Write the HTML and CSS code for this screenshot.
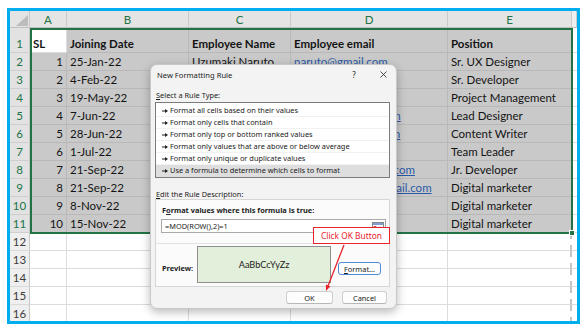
FILE: index.html
```html
<!DOCTYPE html>
<html>
<head>
<meta charset="utf-8">
<title>New Formatting Rule</title>
<link rel="stylesheet" href="styles.css">
</head>
<body>
<div class="frame">
  <div class="sheet">
    <div class="corner"><svg width="20" height="17" viewBox="0 0 20 17"><polygon points="18,4 18,15 6,15" fill="#bcbcbc"/></svg></div>
    <div class="ch">A</div><div class="ch">B</div><div class="ch">C</div><div class="ch">D</div><div class="ch">E</div><div class="ch off"></div>

    <div class="rh">1</div><div class="c act hd">SL</div><div class="c s hd">Joining Date</div><div class="c s hd">Employee Name</div><div class="c s hd">Employee email</div><div class="c s hd">Position</div><div class="c"></div>
    <div class="rh">2</div><div class="c s n">1</div><div class="c s">25-Jan-22</div><div class="c s">Uzumaki Naruto</div><div class="c s lnk">naruto@gmail.com</div><div class="c s">Sr. UX Designer</div><div class="c"></div>
    <div class="rh">3</div><div class="c s n">2</div><div class="c s">4-Feb-22</div><div class="c s"></div><div class="c s"></div><div class="c s">Sr. Developer</div><div class="c"></div>
    <div class="rh">4</div><div class="c s n">3</div><div class="c s">19-May-22</div><div class="c s"></div><div class="c s"></div><div class="c s">Project Management</div><div class="c"></div>
    <div class="rh">5</div><div class="c s n">4</div><div class="c s">7-Jun-22</div><div class="c s"></div><div class="c s lnk">kakashi.h@gmail.com</div><div class="c s">Lead Designer</div><div class="c"></div>
    <div class="rh">6</div><div class="c s n">5</div><div class="c s">28-Jun-22</div><div class="c s"></div><div class="c s lnk">hinata.hy@gmail.com</div><div class="c s">Content Writer</div><div class="c"></div>
    <div class="rh">7</div><div class="c s n">6</div><div class="c s">1-Jul-22</div><div class="c s"></div><div class="c s"></div><div class="c s">Team Leader</div><div class="c"></div>
    <div class="rh">8</div><div class="c s n">7</div><div class="c s">21-Sep-22</div><div class="c s"></div><div class="c s lnk">shikamaru.n@gmail.com</div><div class="c s">Jr. Developer</div><div class="c"></div>
    <div class="rh">9</div><div class="c s n">8</div><div class="c s">21-Sep-22</div><div class="c s"></div><div class="c s lnk">orochimaru.san@gmail.com</div><div class="c s">Digital marketer</div><div class="c"></div>
    <div class="rh">10</div><div class="c s n">9</div><div class="c s">8-Nov-22</div><div class="c s"></div><div class="c s"></div><div class="c s">Digital marketer</div><div class="c"></div>
    <div class="rh">11</div><div class="c s n">10</div><div class="c s">15-Nov-22</div><div class="c s"></div><div class="c s"></div><div class="c s">Digital marketer</div><div class="c"></div>
    <div class="rh off">12</div><div class="c"></div><div class="c"></div><div class="c"></div><div class="c"></div><div class="c pb"></div><div class="c"></div>
    <div class="rh off">13</div><div class="c"></div><div class="c"></div><div class="c"></div><div class="c"></div><div class="c pb"></div><div class="c"></div>
    <div class="rh off">14</div><div class="c"></div><div class="c"></div><div class="c"></div><div class="c"></div><div class="c pb"></div><div class="c"></div>
    <div class="rh off">15</div><div class="c"></div><div class="c"></div><div class="c"></div><div class="c"></div><div class="c pb"></div><div class="c"></div>
    <div class="rh off">16</div><div class="c"></div><div class="c"></div><div class="c"></div><div class="c"></div><div class="c pb"></div><div class="c"></div>
  </div>

  <div class="selection"><span class="handle"></span></div>

  <div class="dialog">
    <div class="dlg-title">
      <span class="dlg-name">New Formatting Rule</span>
      <span class="qm">?</span>
      <svg class="close" width="7" height="7" viewBox="0 0 7 7"><path d="M0.5 0.5L6.5 6.5M6.5 0.5L0.5 6.5" stroke="#222" stroke-width="0.8"/></svg>
    </div>
    <div class="dlg-label"><u>S</u>elect a Rule Type:</div>
    <div class="listbox">
      <div class="item"><svg class="bullet" width="6" height="4" viewBox="0 0 6 4"><path d="M0 1.5h3v1H0zM3 0l3 2-3 2z" fill="#222"/></svg>Format all cells based on their values</div>
      <div class="item"><svg class="bullet" width="6" height="4" viewBox="0 0 6 4"><path d="M0 1.5h3v1H0zM3 0l3 2-3 2z" fill="#222"/></svg>Format only cells that contain</div>
      <div class="item"><svg class="bullet" width="6" height="4" viewBox="0 0 6 4"><path d="M0 1.5h3v1H0zM3 0l3 2-3 2z" fill="#222"/></svg>Format only top or bottom ranked values</div>
      <div class="item"><svg class="bullet" width="6" height="4" viewBox="0 0 6 4"><path d="M0 1.5h3v1H0zM3 0l3 2-3 2z" fill="#222"/></svg>Format only values that are above or below average</div>
      <div class="item"><svg class="bullet" width="6" height="4" viewBox="0 0 6 4"><path d="M0 1.5h3v1H0zM3 0l3 2-3 2z" fill="#222"/></svg>Format only unique or duplicate values</div>
      <div class="item on"><svg class="bullet" width="6" height="4" viewBox="0 0 6 4"><path d="M0 1.5h3v1H0zM3 0l3 2-3 2z" fill="#222"/></svg>Use a formula to determine which cells to format</div>
    </div>
    <div class="dlg-label second"><u>E</u>dit the Rule Description:</div>
    <div class="rule-box">
      <div class="rule-title">F<u>o</u>rmat values where this formula is true:</div>
      <div class="formula">
        <span class="formula-text">=MOD(ROW(),2)=1</span>
        <svg class="ref-btn" width="12" height="8" viewBox="0 0 12 8"><rect x="0.5" y="0.5" width="11" height="7" fill="#fff" stroke="#8a8a8a"/><rect x="1" y="1" width="10" height="2" fill="#7f9fd0"/><path d="M4 4v3M7.5 4v3M1 5.2h10" stroke="#c4c4c4" stroke-width="0.6"/><path d="M1.2 7.2L3.6 4.8M1.6 4.6h2.2v2.2" stroke="#d9262c" stroke-width="0.9" fill="none"/></svg>
      </div>
      <div class="sep"></div>
      <div class="preview-row">
        <div class="preview-label">Preview:</div>
        <div class="preview">AaBbCcYyZz</div>
        <div class="btn focus"><u>F</u>ormat...</div>
      </div>
    </div>
    <div class="dlg-foot">
      <div class="btn ok">OK</div>
      <div class="btn cancel">Cancel</div>
    </div>
  </div>

  <div class="callout">Click OK Button</div>
  <svg class="pointer" width="32" height="50" viewBox="0 0 32 50">
    <line x1="26" y1="2" x2="10.2" y2="42.4" stroke="#e8242b" stroke-width="1.3"/>
    <polygon points="8,48 12.5,43.3 7.9,41.5" fill="#e8242b"/>
  </svg>
</div>
</body>
</html>
```

FILE: styles.css
```css
* { box-sizing: border-box; }

html, body {
  margin: 0;
  background: #ffffff;
}

body {
  width: 588px;
  height: 332px;
  overflow: hidden;
  padding: 8px 0 0 7px;
}

.frame {
  position: relative;
  width: 573px;
  height: 316px;
  border: 3px solid #00aeef;
  overflow: hidden;
  background: #ffffff;
}

/* ---------- spreadsheet ---------- */
.sheet {
  display: grid;
  grid-template-columns: 20px 37px 122px 102px 157px 124px 5px;
  grid-template-rows: 17px 25px repeat(15, 18px);
  font-family: "Lato", "Liberation Sans", sans-serif;
  font-size: 11.5px;
  color: #141414;
}

.corner {
  background: #e4e4e4;
  border-right: 1px solid #c8c8c8;
  border-bottom: 1px solid #c0c0c0;
}
.corner svg { display: block; }

.ch {
  background: #e4e4e4;
  color: #217346;
  border-right: 1px solid #cacaca;
  border-bottom: 1px solid #c0c0c0;
  display: flex;
  align-items: center;
  justify-content: center;
  line-height: 15px;
}
.ch.off { background: #efefef; color: #444; }

.rh {
  background: #e2e2e2;
  color: #217346;
  border-right: 1px solid #c8c8c8;
  border-bottom: 1px solid #cfcfcf;
  display: flex;
  align-items: flex-end;
  justify-content: center;
  padding-bottom: 1px;
  line-height: 15px;
}
.rh.off { background: #efefef; color: #3c3c3c; border-bottom-color: #dadada; }

.c {
  border-right: 1px solid #dcdcdc;
  border-bottom: 1px solid #dcdcdc;
  padding: 0 3px 1px 3px;
  display: flex;
  align-items: flex-end;
  line-height: 15px;
  white-space: nowrap;
  overflow: hidden;
}
.c.s { background: #c9c9c9; border-color: #b9b9b9; }
.c.act { background: #ffffff; }
.c.n { justify-content: flex-end; }
.c.hd { font-weight: 700; }
.c.lnk { color: #2a5aa6; text-decoration: underline; }
.c.pb { border-right: 2px dashed #c4c4c4; }

.selection {
  position: absolute;
  left: 20px;
  top: 17px;
  width: 543px;
  height: 206px;
  border: 2px solid #217346;
  pointer-events: none;
}
.handle {
  position: absolute;
  right: -4px;
  bottom: -4px;
  width: 6px;
  height: 6px;
  background: #217346;
  border: 1px solid #ffffff;
}

/* ---------- dialog ---------- */
.dialog {
  position: absolute;
  left: 140px;
  top: 53px;
  width: 247px;
  height: 245px;
  background: #f3f3f3;
  border: 1px solid #c8c8c8;
  border-radius: 7px;
  box-shadow: 0 3px 10px rgba(0, 0, 0, 0.28);
  padding: 0 6px 0 4px;
  display: flex;
  flex-direction: column;
  font-family: "Noto Sans", "Open Sans", sans-serif;
  font-size: 7.4px;
  color: #1b1b1b;
}

.dlg-title {
  height: 19px;
  display: flex;
  align-items: center;
  padding-left: 2px;
  font-size: 7.6px;
}
.dlg-name { flex: 1; }
.qm {
  width: 10px;
  text-align: center;
  font-size: 8px;
  margin-right: 21px;
}
.close { margin-right: 3px; display: block; }

.dlg-label {
  margin-top: 6px;
  line-height: 10px;
  padding-left: 1px;
}
.dlg-label.second { margin-top: 11px; }

.listbox {
  margin-top: 2px;
  height: 76px;
  background: #ffffff;
  border: 1px solid #7b7b7b;
  padding-top: 2px;
}
.item {
  height: 12px;
  line-height: 11px;
  display: flex;
  align-items: center;
  padding-left: 6px;
  border-bottom: 1px solid #f1f1f1;
  white-space: nowrap;
}
.item.on { background: #dedede; border-bottom-color: #dedede; }
.bullet { margin-right: 2px; flex: none; }

.rule-box {
  height: 88px;
  background: #fbfbfb;
  border: 1px solid #d6d6d6;
  padding: 0 3px 0 5px;
}
.rule-title {
  margin-top: 5px;
  line-height: 10px;
  padding-left: 1px;
  font-weight: 700;
}
.formula {
  margin-top: 4px;
  height: 14px;
  background: #ffffff;
  border: 1px solid #a9a9a9;
  display: flex;
  align-items: center;
  padding: 0 1px 0 3px;
}
.formula-text { flex: 1; }
.ref-btn { display: block; }

.sep {
  margin: 10px -3px 0 -5px;
  height: 1px;
  background: #e2e2e2;
}

.preview-row {
  margin-top: 2px;
  display: flex;
  align-items: flex-start;
}
.preview-label {
  width: 36px;
  margin-top: 17px;
  line-height: 10px;
  padding-left: 1px;
  font-weight: 700;
}
.preview {
  width: 134px;
  height: 37px;
  background: #e2efda;
  border: 1px solid #8f8f8f;
  display: flex;
  align-items: center;
  justify-content: center;
  font-family: "Lato", sans-serif;
  font-size: 9.2px;
  color: #222;
}

.btn {
  height: 13px;
  background: #fdfdfd;
  border: 1px solid #cfcfcf;
  border-bottom-color: #b8b8b8;
  border-radius: 3px;
  display: flex;
  align-items: center;
  justify-content: center;
}
.btn.focus {
  width: 43px;
  margin-left: 7px;
  margin-top: 16px;
  border: 1px solid #4f8ad6;
}

.dlg-foot {
  margin-top: 4px;
  display: flex;
  justify-content: flex-end;
  gap: 9px;
  padding-right: 3px;
}
.btn.ok { width: 47px; }
.btn.cancel { width: 45px; }

/* ---------- annotation ---------- */
.callout {
  position: absolute;
  left: 303px;
  top: 216px;
  width: 77px;
  height: 17px;
  background: #ffffff;
  border: 1px solid #e8242b;
  color: #e8242b;
  font-family: "Noto Sans", sans-serif;
  font-size: 8.4px;
  display: flex;
  align-items: center;
  justify-content: center;
}
.pointer {
  position: absolute;
  left: 308px;
  top: 232px;
}
```
